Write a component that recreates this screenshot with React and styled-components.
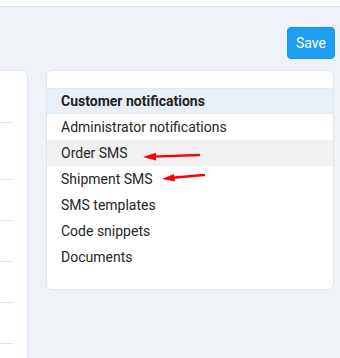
import React from 'react';
import styled, { createGlobalStyle } from 'styled-components';

const GlobalStyle = createGlobalStyle`
  html, body {
    margin: 0;
    padding: 0;
    background: #eff3f8;
    font-family: Roboto, "Liberation Sans", sans-serif;
    overflow: hidden;
  }
`;

const menuItems = [
  { label: 'Administrator notifications' },
  { label: 'Order SMS', hovered: true },
  { label: 'Shipment SMS' },
  { label: 'SMS templates' },
  { label: 'Code snippets' },
  { label: 'Documents' },
];

const leftRows = [52, 57, 41, 41, 41, 41];

const App = () => {
  return (
    <Page>
      <GlobalStyle />
      <TopBar />
      <Toolbar>
        <SaveButton>Save</SaveButton>
      </Toolbar>
      <Main>
        <LeftPanel>
          {leftRows.map((h, i) => (
            <LeftRow key={i} $height={h} />
          ))}
        </LeftPanel>
        <Card>
          <MenuHeader>Customer notifications</MenuHeader>
          {menuItems.map((item) => (
            <MenuItem key={item.label} $hovered={item.hovered}>
              {item.label}
            </MenuItem>
          ))}
          <Annotations viewBox="0 0 288 220" width="288" height="220">
            <line x1="152" y1="84" x2="106" y2="85.6" stroke="#f00" strokeWidth="2.4" strokeLinecap="round" />
            <polygon points="96,86 109,81.8 109,89.6" fill="#f00" />
            <line x1="157" y1="104" x2="125" y2="106.8" stroke="#f00" strokeWidth="2.4" strokeLinecap="round" />
            <polygon points="115,108 127,103 128,110.6" fill="#f00" />
          </Annotations>
        </Card>
      </Main>
    </Page>
  );
};

const Page = styled.div`
  display: flex;
  flex-direction: column;
`;

const TopBar = styled.div`
  flex-shrink: 0;
  height: 6px;
  background: #fff;
  border-bottom: 1px solid #e1e6ee;
`;

const Toolbar = styled.div`
  flex-shrink: 0;
  display: flex;
  justify-content: flex-end;
  padding: 20px 5px 0 0;
`;

const SaveButton = styled.button`
  width: 48px;
  height: 32px;
  background: #1f9ff2;
  border: 1px solid #1b93e4;
  border-radius: 4px;
  color: #fff;
  font-family: Roboto, "Liberation Sans", sans-serif;
  font-size: 14px;
  padding: 0;
  cursor: pointer;
`;

const Main = styled.div`
  display: flex;
  align-items: flex-start;
  gap: 18px;
  margin-top: 11px;
  padding-right: 6px;
`;

const LeftPanel = styled.div`
  flex-shrink: 0;
  width: 28px;
  height: 300px;
  box-sizing: border-box;
  background: #fff;
  border: 1px solid #dfe5ee;
  border-left: none;
  border-radius: 0 6px 0 0;
  padding-right: 14px;
`;

const LeftRow = styled.div`
  height: ${(p) => p.$height}px;
  box-sizing: border-box;
  border-bottom: 1px solid #dfe5ee;
`;

const Card = styled.div`
  position: relative;
  flex: 1;
  box-sizing: border-box;
  background: #fff;
  border: 1px solid #dfe5ee;
  border-radius: 6px;
  padding: 17px 0 19px;
`;

const MenuHeader = styled.div`
  height: 26px;
  box-sizing: border-box;
  display: flex;
  align-items: center;
  padding-left: 14px;
  background: #e9eff7;
  border-top: 1px solid #e1e8f1;
  border-bottom: 1px solid #e1e8f1;
  color: #222;
  font-size: 14px;
  font-weight: 700;
`;

const MenuItem = styled.div`
  height: 26px;
  display: flex;
  align-items: center;
  padding-left: 14px;
  background: ${(p) => (p.$hovered ? '#f1f1f1' : 'transparent')};
  color: #262626;
  font-size: 14px;
`;

const Annotations = styled.svg`
  position: absolute;
  left: 0;
  top: 0;
  pointer-events: none;
`;

export default App;
